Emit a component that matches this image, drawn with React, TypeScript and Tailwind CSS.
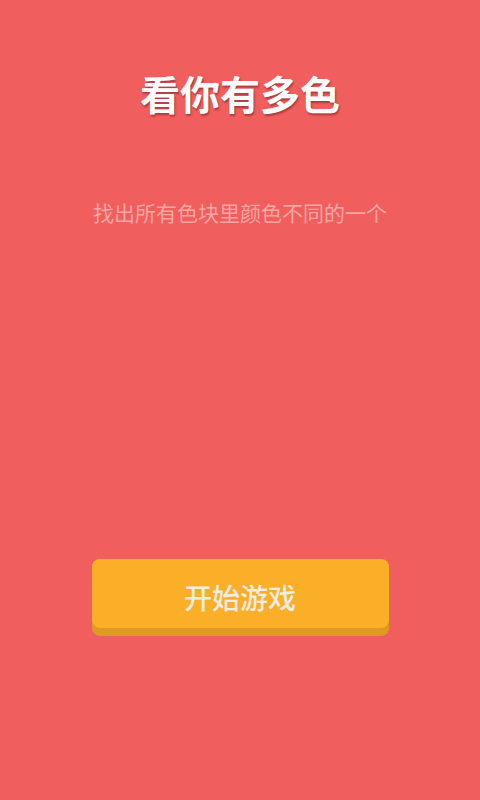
export default function App() {
  return (
    <div
      className="w-[480px] h-[800px] bg-[#f05e5e] flex flex-col items-center"
      style={{ fontFamily: '"Noto Sans CJK SC", "Noto Sans", sans-serif' }}
    >
      <h1 className="mt-[70px] h-[46px] text-[40px] leading-[46px] font-bold text-white [text-shadow:1px_2px_2px_rgba(120,30,30,0.55)]">
        看你有多色
      </h1>
      <p className="mt-[82px] text-[21px] leading-[28px] text-[#f7a6a4]">
        找出所有色块里颜色不同的一个
      </p>
      <button className="mt-[333px] w-[297px] h-[77px] rounded-[8px] bg-[#df9a24] pb-[8px]">
        <span className="flex h-[69px] items-center justify-center rounded-[8px] bg-[#fbaf29] pt-[6px] text-[28px] font-medium text-[#f1ece0]">
          开始游戏
        </span>
      </button>
    </div>
  );
}
